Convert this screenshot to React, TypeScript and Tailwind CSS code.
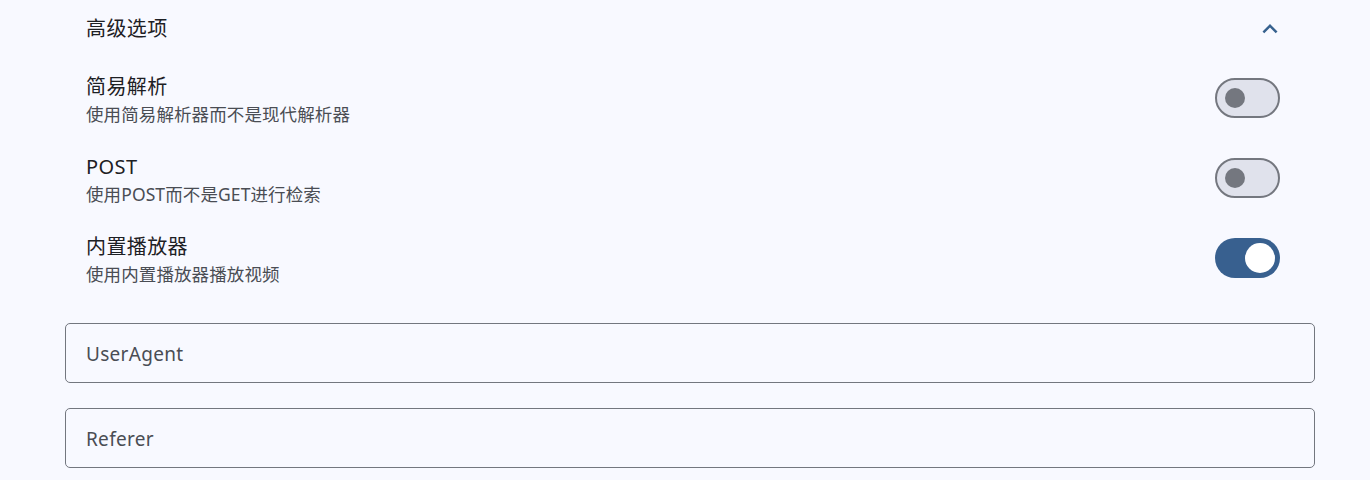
import React from "react";

const font = { fontFamily: '"Noto Sans", "Noto Sans CJK SC", sans-serif' };

function Toggle({ on }: { on: boolean }) {
  if (on) {
    return (
      <div className="w-[65px] h-[40px] rounded-full bg-[#38608f] flex items-center justify-end pr-[5px]">
        <div className="w-[30px] h-[30px] rounded-full bg-white" />
      </div>
    );
  }
  return (
    <div className="w-[65px] h-[40px] rounded-full bg-[#e0e2ec] border-[2.5px] border-[#74777f] flex items-center pl-[8px]">
      <div className="w-[20px] h-[20px] rounded-full bg-[#74777f]" />
    </div>
  );
}

function Row({ title, sub, on }: { title: string; sub: string; on: boolean }) {
  return (
    <div className="h-[80px] flex items-center pl-[21px] pr-[35px]">
      <div className="flex-1 flex flex-col pt-[3px]">
        <div className="text-[20px] leading-[30px] tracking-[0.4px] text-[#1d2024]">{title}</div>
        <div className="text-[17.5px] leading-[25px] tracking-[0.1px] text-[#4a4d54]">{sub}</div>
      </div>
      <Toggle on={on} />
    </div>
  );
}

function Field({ label }: { label: string }) {
  return (
    <div className="h-[60px] rounded-[5px] border border-[#73777f] flex items-center pl-[20px] pt-[3px]">
      <span className="text-[19px] tracking-[0.3px] text-[#4a4d54]">{label}</span>
    </div>
  );
}

export default function App() {
  return (
    <div className="w-[1370px] h-[480px] overflow-hidden bg-[#f8f9ff]" style={font}>
      <div className="ml-[65px] w-[1250px]">
        <div className="h-[58px] flex items-center pl-[21px] pr-[30px]">
          <div className="flex-1 text-[20px] tracking-[0.4px] text-[#1d2024]">高级选项</div>
          <svg width="30" height="30" viewBox="0 0 24 24" fill="#36618e">
            <path d="M12 8l-6 6 1.41 1.41L12 10.83l4.59 4.58L18 14z" />
          </svg>
        </div>
        <Row title="简易解析" sub="使用简易解析器而不是现代解析器" on={false} />
        <Row title="POST" sub="使用POST而不是GET进行检索" on={false} />
        <Row title="内置播放器" sub="使用内置播放器播放视频" on={true} />
        <div className="flex flex-col gap-[25px] pt-[25px]">
          <Field label="UserAgent" />
          <Field label="Referer" />
        </div>
      </div>
    </div>
  );
}
